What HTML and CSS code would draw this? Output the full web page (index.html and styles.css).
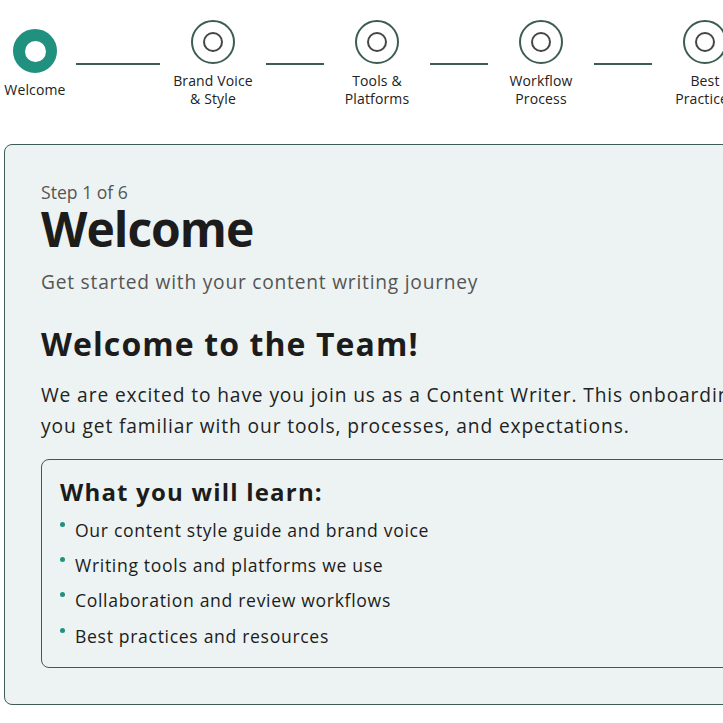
FILE: index.html
```html
<!DOCTYPE html>
<html lang="en">
<head>
<meta charset="utf-8">
<title>Content Writer Onboarding</title>
<link rel="stylesheet" href="styles.css">
</head>
<body>
<div class="page">
  <nav class="stepper">
    <div class="step step-first active">
      <div class="circle"><div class="dot"></div></div>
      <div class="label">Welcome</div>
    </div>
    <div class="connector connector-first"></div>
    <div class="step">
      <div class="circle"><div class="dot"></div></div>
      <div class="label">Brand Voice &amp; Style</div>
    </div>
    <div class="connector"></div>
    <div class="step">
      <div class="circle"><div class="dot"></div></div>
      <div class="label">Tools &amp; Platforms</div>
    </div>
    <div class="connector"></div>
    <div class="step">
      <div class="circle"><div class="dot"></div></div>
      <div class="label">Workflow Process</div>
    </div>
    <div class="connector"></div>
    <div class="step">
      <div class="circle"><div class="dot"></div></div>
      <div class="label">Best Practices</div>
    </div>
    <div class="connector"></div>
    <div class="step">
      <div class="circle"><div class="dot"></div></div>
      <div class="label">Resources</div>
    </div>
  </nav>

  <main class="card">
    <p class="step-count">Step 1 of 6</p>
    <h1 class="title">Welcome</h1>
    <p class="subtitle">Get started with your content writing journey</p>
    <h2 class="section-title">Welcome to the Team!</h2>
    <p class="intro">We are excited to have you join us as a Content Writer. This onboarding process will help you get familiar with our tools, processes, and expectations.</p>
    <section class="learn-box">
      <h3 class="learn-title">What you will learn:</h3>
      <ul class="learn-list">
        <li>Our content style guide and brand voice</li>
        <li>Writing tools and platforms we use</li>
        <li>Collaboration and review workflows</li>
        <li>Best practices and resources</li>
      </ul>
    </section>
  </main>
</div>
</body>
</html>
```
FILE: styles.css
```css
* { box-sizing: border-box; }

html, body {
  margin: 0;
  padding: 0;
  background: #ffffff;
}

body {
  font-family: "Open Sans", "Noto Sans", sans-serif;
  color: #1c1c1c;
  overflow: hidden;
}

.page {
  padding: 20px 4px 40px 4px;
  width: 1040px;
}

/* Stepper */
.stepper {
  display: flex;
  align-items: center;
}

.step {
  flex: 0 0 82px;
  width: 82px;
  display: flex;
  flex-direction: column;
  align-items: center;
  gap: 8px;
}

.step-first {
  flex-basis: 62px;
  width: 62px;
}

.circle {
  width: 44px;
  height: 44px;
  border-radius: 50%;
  border: 2px solid #3d5c55;
  background: #ffffff;
  display: flex;
  align-items: center;
  justify-content: center;
}

.dot {
  width: 20px;
  height: 20px;
  border-radius: 50%;
  border: 2px solid #464646;
}

.step.active .circle {
  background: #21917f;
  border-color: #21917f;
}

.step.active .dot {
  width: 21px;
  height: 21px;
  background: #ffffff;
  border-color: #ffffff;
}

.label {
  font-size: 14px;
  line-height: 18px;
  text-align: center;
  color: #222222;
  letter-spacing: 0.01em;
}

.connector {
  flex: 0 0 58px;
  height: 2px;
  background: #3d5c55;
  margin: 0 12px;
}

.connector-first {
  flex-basis: 84px;
  margin-left: 10px;
}

/* Card */
.card {
  margin-top: 36px;
  width: 961px;
  background: #edf3f2;
  border: 1px solid #3d5c55;
  border-radius: 8px;
  padding: 36px;
}

.step-count {
  margin: 0;
  font-size: 17.6px;
  line-height: 22px;
  color: #555555;
}

.title {
  margin: 0;
  font-size: 48px;
  line-height: 1.1;
  font-weight: 700;
  letter-spacing: -1px;
  color: #1c1c1c;
}

.subtitle {
  margin: 12px 0 0 0;
  font-size: 19.2px;
  line-height: 28.8px;
  letter-spacing: 0.04em;
  color: #555555;
}

.section-title {
  margin: 28px 0 0 0;
  font-size: 32px;
  line-height: 38.4px;
  font-weight: 700;
  letter-spacing: 0.034em;
  color: #1c1c1c;
}

.intro {
  margin: 17px 0 0 0;
  font-size: 19.2px;
  line-height: 30.7px;
  letter-spacing: 0.046em;
  color: #222222;
}

.learn-box {
  margin-top: 18px;
  border: 1px solid #3d5c55;
  border-radius: 8px;
  padding: 16px 18px 17px 18px;
}

.learn-title {
  margin: 0;
  font-size: 24px;
  line-height: 31.2px;
  font-weight: 700;
  letter-spacing: 0.05em;
  color: #1c1c1c;
}

.learn-list {
  list-style: none;
  margin: 8px 0 0 0;
  padding: 0;
  display: flex;
  flex-direction: column;
  gap: 7.3px;
}

.learn-list li {
  display: flex;
  align-items: flex-start;
  gap: 10px;
  font-size: 17.6px;
  line-height: 28px;
  letter-spacing: 0.038em;
  color: #1c1c1c;
}

.learn-list li::before {
  content: "";
  flex: 0 0 5px;
  width: 5px;
  height: 5px;
  margin-top: 6px;
  border-radius: 50%;
  background: #21917f;
}
```
